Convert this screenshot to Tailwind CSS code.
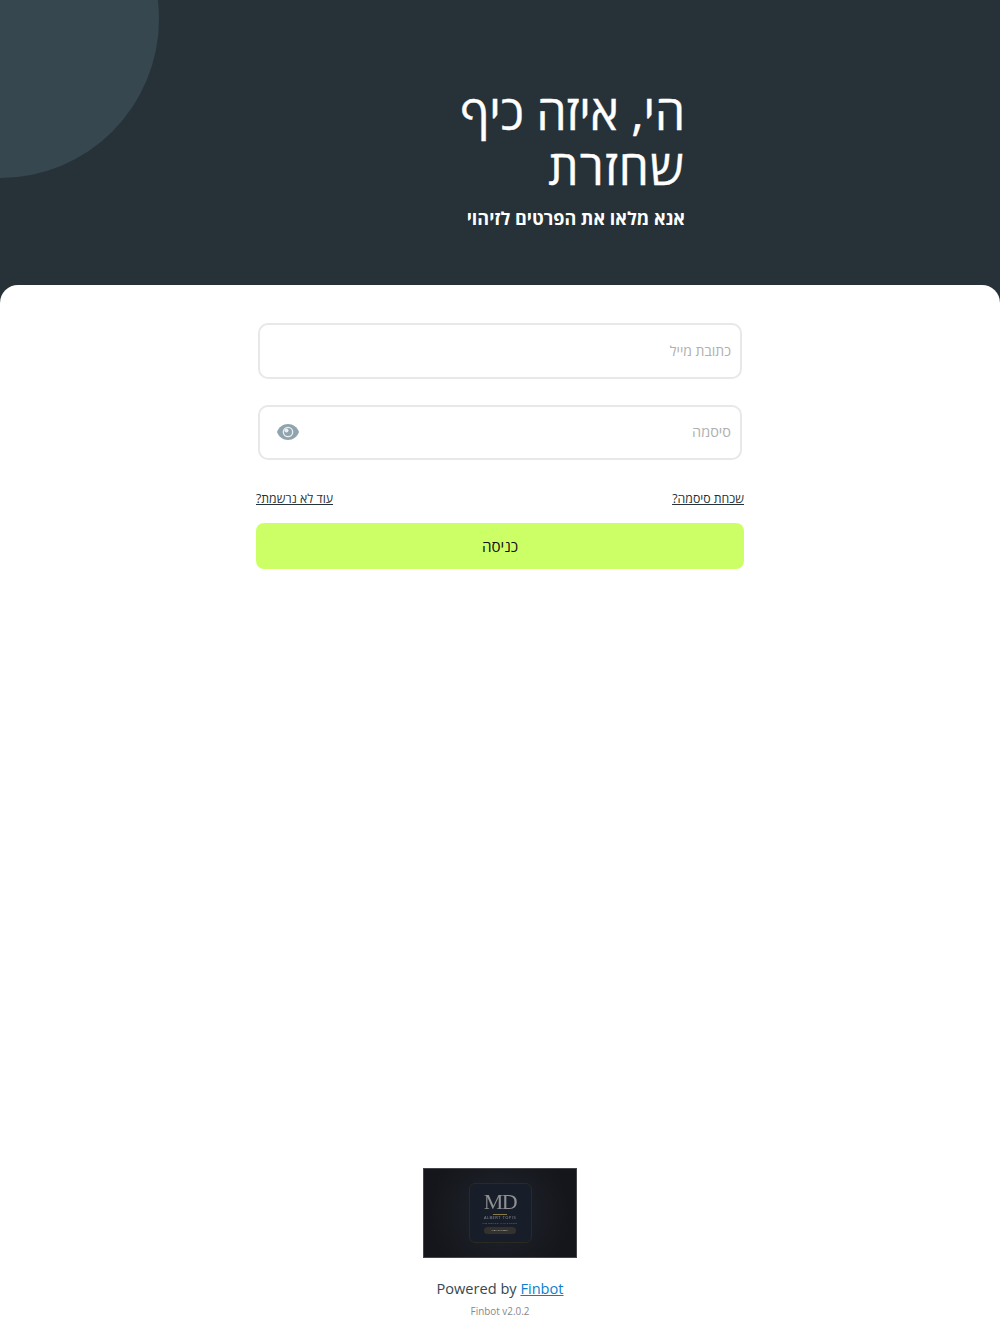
<!DOCTYPE html>
<html lang="he" dir="rtl">
<head>
<meta charset="utf-8">
<script src="https://cdn.jsdelivr.net/npm/@tailwindcss/browser@4"></script>
</head>
<body class="font-['Open_Sans',sans-serif] bg-[#263238]">
<div class="relative w-[1000px] h-[1334px] overflow-hidden flex flex-col">
  <div class="absolute left-[-159px] top-[-140px] w-[318px] h-[318px] rounded-full bg-[#37474f]"></div>
  <header class="relative h-[285px] pt-[84px] pr-[315px]">
    <h1 class="w-[240px] text-[47.8px] leading-[55px] font-normal text-white [-webkit-text-stroke:0.4px_white]">הי, איזה כיף <span class="tracking-[1.2px]">שחזרת</span></h1>
    <p class="mt-[12px] text-[18px] leading-[24px] font-bold text-white">אנא מלאו את הפרטים לזיהוי</p>
  </header>
  <main class="relative flex-1 bg-white rounded-t-[18px] flex flex-col items-center pt-[38px]">
    <div class="w-[488px] flex flex-col">
      <div class="mx-[2px] h-[55.500px] rounded-[10px] border-2 border-[#e8e8e8] flex items-center pr-[9px] pl-[10px] text-[14px] text-[#b0b0b0]">כתובת מייל</div>
      <div class="mx-[2px] mt-[26px] h-[55.500px] rounded-[10px] border-2 border-[#e8e8e8] flex items-center justify-between pr-[9px] pl-[16px] text-[14.5px] text-[#b0b0b0]">
        <span>סיסמה</span>
        <svg class="w-[24px] h-[16px]" viewBox="0 0 24 16"><path fill="#90a4ae" d="M12 0C7 0 2.700 3.100 1 8c1.700 4.900 6 8 11 8s9.300-3.100 11-8c-1.700-4.900-6-8-11-8z"/><circle cx="12" cy="8" r="5.300" fill="#eceff1"/><circle cx="12" cy="8" r="4" fill="#90a4ae"/><circle cx="10.500" cy="6.500" r="2" fill="#eceff1"/></svg>
      </div>
      <div class="mt-[30px] flex justify-between text-[12.3px] leading-[18px] text-[#263238] underline">
        <a href="#">שכחת סיסמה?</a>
        <a href="#">עוד לא נרשמת?</a>
      </div>
      <button class="mt-[15px] h-[46px] rounded-[8px] bg-[#ccff66] text-[15.2px] text-[#111]">כניסה</button>
    </div>
    <footer class="mt-auto pb-[16px] flex flex-col items-center" dir="ltr">
      <div class="w-[154px] h-[90px] bg-[radial-gradient(circle,#20242c_0%,#14161b_80%)] flex items-center justify-center border border-[#8b8d91]/40">
        <div class="w-[63px] h-[60px] rounded-[6px] bg-[#181d2a] border border-[#2b2a22] flex flex-col items-center pt-[6px] blur-[0.4px]">
          <span class="font-['Liberation_Serif',serif] text-[22px] leading-[24px] text-[#8e9091] tracking-[-1.500px]">MD</span>
          <span class="block w-[14px] h-px bg-[#8a7a45]"></span>
          <span class="text-[4px] leading-[6px] text-[#8f949c] tracking-[0.5px]">ALBERT TOPIS</span>
          <span class="text-[2.500px] leading-[5px] text-[#7b818b] tracking-[0.6px]">MOMENTS CAPTURED</span>
          <span class="mt-[1px] w-[32px] h-[7px] rounded-full bg-[#33322d] text-[2.500px] leading-[7px] text-center text-[#c9c9c4]">VIEW GALLERY</span>
        </div>
      </div>
      <p class="mt-[19px] text-[14.6px] leading-[22px] text-[#37474f]">Powered by <a href="#" class="text-[#0a7fd0] underline">Finbot</a></p>
      <p class="mt-[5px] text-[9.900px] leading-[14px] text-[#888]">Finbot v2.0.2</p>
    </footer>
  </main>
</div>
</body>
</html>
